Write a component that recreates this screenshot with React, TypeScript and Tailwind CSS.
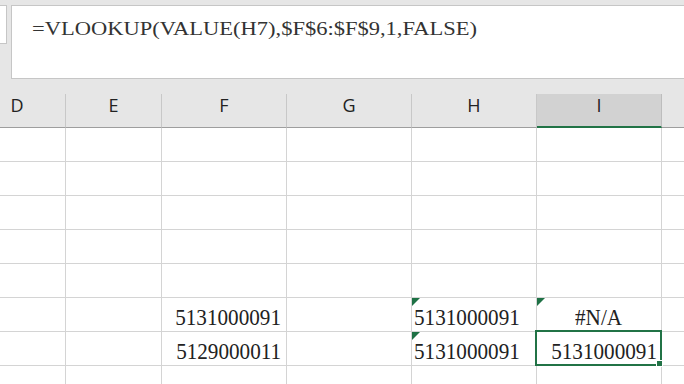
import React from "react";

const serif = { fontFamily: '"Liberation Serif", "Times New Roman", serif' };

function Tri() {
  return (
    <svg className="absolute left-0 top-0" width="8" height="8" viewBox="0 0 8 8">
      <polygon points="0,0 8,0 0,8" fill="#1e7145" />
    </svg>
  );
}

const widths = ["w-[97px]", "w-[96px]", "w-[125px]", "w-[125px]", "w-[125px]", "w-[125px]", "w-[125px]"];
const letters = ["D", "E", "F", "G", "H", "I", ""];

export default function App() {
  const emptyRows = [0, 1, 2, 3, 4];
  return (
    <div className="w-[684px] h-[384px] overflow-hidden bg-white relative">
      <div className="h-[94px] bg-[#e6e6e6] flex items-start pt-[5px] gap-[4px]">
        <div className="w-[7px] h-[39px] bg-white border border-l-0 border-[#c6c6c6] shrink-0" />
        <div className="flex-1 h-[74px] bg-white border border-r-0 border-[#c6c6c6] pl-[20px] pt-[10px]">
          <span
            className="inline-block origin-bottom scale-y-[0.85] text-[22.5px] leading-[22px] text-[#333] whitespace-nowrap"
            style={serif}
          >
            =VLOOKUP(VALUE(H7),$F$6:$F$9,1,FALSE)
          </span>
        </div>
      </div>
      <div className="overflow-hidden">
        <div className="ml-[-31px] flex flex-col w-[900px]">
          <div className="flex h-[34px] bg-[#e6e6e6]">
            {letters.map((l, i) => (
              <div
                key={i}
                className={`${widths[i]} shrink-0 h-full border-r flex justify-center text-[18px] leading-[22px] text-[#222] ${
                  l === "I"
                    ? "bg-[#d2d2d2] border-b-2 border-b-[#217346] border-r-[#bdbdbd]"
                    : "border-b border-b-[#9e9e9e] border-r-[#c8c8c8]"
                }`}
                style={{ fontFamily: '"Open Sans", "Noto Sans", sans-serif' }}
              >
                {l}
              </div>
            ))}
          </div>
          {emptyRows.map((r) => (
            <div key={r} className="flex h-[34px]">
              {widths.map((w, i) => (
                <div key={i} className={`${w} shrink-0 h-full border-r border-b border-[#d4d4d4]`} />
              ))}
            </div>
          ))}
          <div className="flex h-[34px] text-[#222]" style={serif}>
            <div className="w-[97px] shrink-0 h-full border-r border-b border-[#d4d4d4]" />
            <div className="w-[96px] shrink-0 h-full border-r border-b border-[#d4d4d4]" />
            <div className="w-[125px] shrink-0 h-full border-r border-b border-[#d4d4d4] flex items-end justify-end pr-[5px] pb-[2px]">
              <span className="inline-block origin-right scale-x-[0.92] text-[23px] leading-[22px]">5131000091</span>
            </div>
            <div className="w-[125px] shrink-0 h-full border-r border-b border-[#d4d4d4]" />
            <div className="w-[125px] shrink-0 h-full border-r border-b border-[#d4d4d4] relative flex items-end pl-[2px] pb-[2px]">
              <Tri />
              <span className="inline-block origin-left scale-x-[0.92] text-[23px] leading-[22px]">5131000091</span>
            </div>
            <div className="w-[125px] shrink-0 h-full border-r border-b border-[#d4d4d4] relative flex items-end justify-center pb-[2px]">
              <Tri />
              <span className="inline-block scale-x-[0.92] text-[23px] leading-[22px]">#N/A</span>
            </div>
            <div className="w-[125px] shrink-0 h-full border-r border-b border-[#d4d4d4]" />
          </div>
          <div className="flex h-[34px] text-[#222]" style={serif}>
            <div className="w-[97px] shrink-0 h-full border-r border-b border-[#d4d4d4]" />
            <div className="w-[96px] shrink-0 h-full border-r border-b border-[#d4d4d4]" />
            <div className="w-[125px] shrink-0 h-full border-r border-b border-[#d4d4d4] flex items-end justify-end pr-[5px] pb-[2px]">
              <span className="inline-block origin-right scale-x-[0.92] text-[23px] leading-[22px]">5129000011</span>
            </div>
            <div className="w-[125px] shrink-0 h-full border-r border-b border-[#d4d4d4]" />
            <div className="w-[125px] shrink-0 h-full border-r border-b border-[#d4d4d4] relative flex items-end pl-[2px] pb-[2px]">
              <Tri />
              <span className="inline-block origin-left scale-x-[0.92] text-[23px] leading-[22px]">5131000091</span>
            </div>
            <div className="w-[125px] shrink-0 h-full border-r border-b border-[#d4d4d4] relative flex items-end justify-end pr-[4px] pb-[2px]">
              <span className="inline-block origin-right scale-x-[0.92] text-[23px] leading-[22px]">5131000091</span>
              <div className="absolute left-[-2px] top-[-2px] right-[-1px] bottom-[-1px] border-2 border-[#217346]" />
              <div className="absolute right-[-2px] bottom-[-2px] w-[7px] h-[7px] bg-[#217346] border border-white" />
            </div>
            <div className="w-[125px] shrink-0 h-full border-r border-b border-[#d4d4d4]" />
          </div>
          <div className="flex h-[34px]">
            {widths.map((w, i) => (
              <div key={i} className={`${w} shrink-0 h-full border-r border-b border-[#d4d4d4]`} />
            ))}
          </div>
        </div>
      </div>
    </div>
  );
}
